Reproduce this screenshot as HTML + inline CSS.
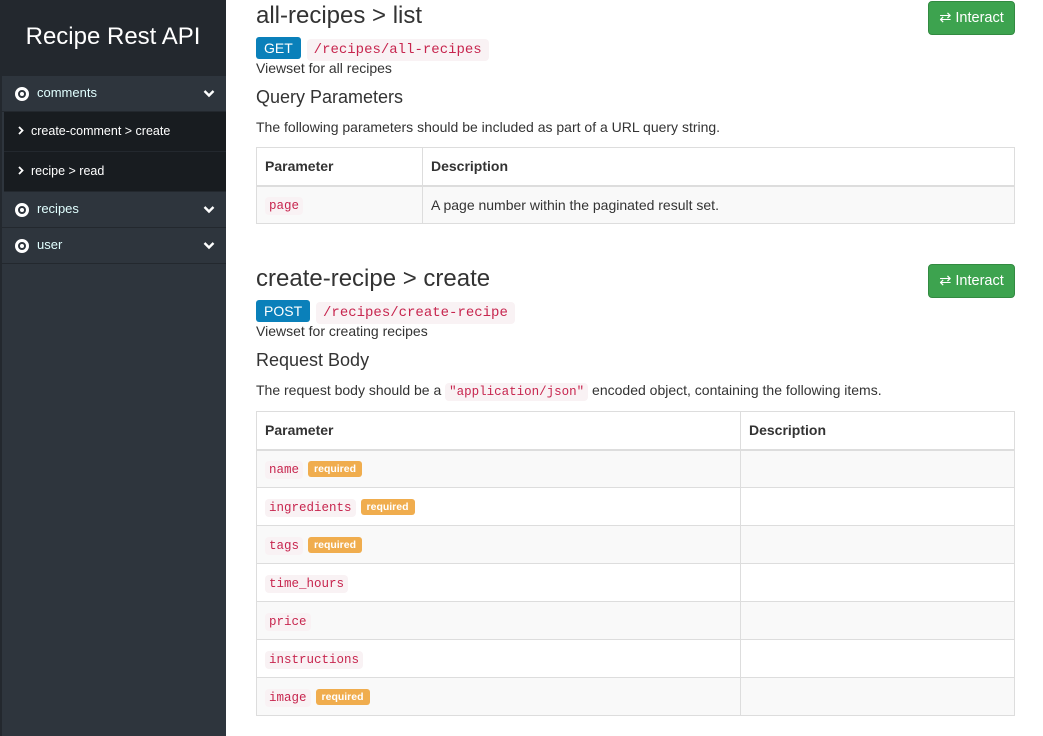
<!DOCTYPE html>
<html><head><meta charset="utf-8"><style>
*{box-sizing:border-box}
body{margin:0;width:1043px;height:736px;overflow:hidden;font-family:"Liberation Sans",sans-serif;font-size:14px;color:#333;background:#fff;position:relative}
.sb{position:absolute;left:0;top:0;width:226px;height:736px;background:#2e353d;border-left:2px solid #23282e}
.sbh{height:76px;background:#23282e;color:#fff;font-size:24px;text-align:center;padding-top:23px;margin-left:-2px}
.it{height:36px;border-bottom:1px solid #23282e;color:#e1ffff;font-size:13px;position:relative;line-height:34px;padding-left:35px}
.it .c{position:absolute;left:13px;top:11px;width:14px;height:14px;border:3px solid #fff;border-radius:50%}
.it .c:after{content:"";position:absolute;left:2px;top:2px;width:4px;height:4px;background:#fff;border-radius:50%}
.it svg{position:absolute;right:11px;top:13px}
.sub{background:#181c20;margin-left:2px}
.sub div{height:40px;line-height:38px;color:#fff;font-size:12.5px;padding-left:27px;border-bottom:1px solid #23282e;position:relative}
.sub div svg{position:absolute;left:14px;top:14px}
.a{position:absolute;left:256px}
h1{position:absolute;left:256px;margin:0;font-weight:500;font-size:24px;color:#333}
h3{position:absolute;left:256px;margin:0;font-weight:400;font-size:18px}
.btn{position:absolute;left:928px;width:87px;height:34px;background:#3da34f;border:1px solid #328a41;border-radius:4px;color:#fff;font-size:14.5px;line-height:32px;text-align:center}
.m{display:inline-block;background:#0a80ba;color:#fff;font-size:14px;height:22px;line-height:22px;padding:0 8px;border-radius:3px}
code{font-family:"Liberation Mono",monospace;color:#c7254e;background:#f9f2f4;border-radius:4px;padding:2px 4px;font-size:12.5px}
.u{font-size:14px;padding:3px 7px;margin-left:2px}
table{position:absolute;left:256px;width:759px;border-collapse:collapse}
td,th{border:1px solid #ddd;height:38px;padding:0 8px;text-align:left;font-size:14px}
th{border-bottom:2px solid #ddd}
tbody tr:nth-child(odd){background:#f9f9f9}
.r{display:inline-block;background:#f0ad4e;color:#fff;font-size:10.5px;font-weight:bold;padding:2px 6px;border-radius:3px;margin-left:5px;vertical-align:1px}
</style></head><body>
<div class="sb">
<div class="sbh">Recipe Rest API</div>
<div class="it"><span class="c"></span>comments<svg width="12" height="9" viewBox="0 0 12 9"><path d="M1.5 2l4.5 4.5 4.5-4.5" stroke="#fff" stroke-width="2.4" fill="none"/></svg></div>
<div class="sub"><div><svg width="6" height="9" viewBox="0 0 6 9"><path d="M1 1l3.5 3.5L1 8" stroke="#fff" stroke-width="1.8" fill="none"/></svg>create-comment &gt; create</div><div><svg width="6" height="9" viewBox="0 0 6 9"><path d="M1 1l3.5 3.5L1 8" stroke="#fff" stroke-width="1.8" fill="none"/></svg>recipe &gt; read</div></div>
<div class="it"><span class="c"></span>recipes<svg width="12" height="9" viewBox="0 0 12 9"><path d="M1.5 2l4.5 4.5 4.5-4.5" stroke="#fff" stroke-width="2.4" fill="none"/></svg></div>
<div class="it"><span class="c"></span>user<svg width="12" height="9" viewBox="0 0 12 9"><path d="M1.5 2l4.5 4.5 4.5-4.5" stroke="#fff" stroke-width="2.4" fill="none"/></svg></div>
</div>

<h1 style="top:2px">all-recipes &gt; list</h1>
<div class="btn" style="top:1px">⇄ Interact</div>
<div class="a" style="top:37px"><span class="m">GET</span> <code class="u">/recipes/all-recipes</code></div>
<div class="a" style="top:60px">Viewset for all recipes</div>
<h3 style="top:87px">Query Parameters</h3>
<div class="a" style="top:119px">The following parameters should be included as part of a URL query string.</div>
<table style="top:147px"><thead><tr><th style="width:166px">Parameter</th><th>Description</th></tr></thead>
<tbody><tr><td><code>page</code></td><td>A page number within the paginated result set.</td></tr></tbody></table>

<h1 style="top:265px">create-recipe &gt; create</h1>
<div class="btn" style="top:264px">⇄ Interact</div>
<div class="a" style="top:300px"><span class="m">POST</span> <code class="u">/recipes/create-recipe</code></div>
<div class="a" style="top:323px">Viewset for creating recipes</div>
<h3 style="top:350px">Request Body</h3>
<div class="a" style="top:382px">The request body should be a <code>"application/json"</code> encoded object, containing the following items.</div>
<table style="top:411px"><thead><tr><th style="width:484px">Parameter</th><th>Description</th></tr></thead>
<tbody>
<tr><td><code>name</code><span class="r">required</span></td><td></td></tr>
<tr><td><code>ingredients</code><span class="r">required</span></td><td></td></tr>
<tr><td><code>tags</code><span class="r">required</span></td><td></td></tr>
<tr><td><code>time_hours</code></td><td></td></tr>
<tr><td><code>price</code></td><td></td></tr>
<tr><td><code>instructions</code></td><td></td></tr>
<tr><td><code>image</code><span class="r">required</span></td><td></td></tr>
</tbody></table>
</body></html>
